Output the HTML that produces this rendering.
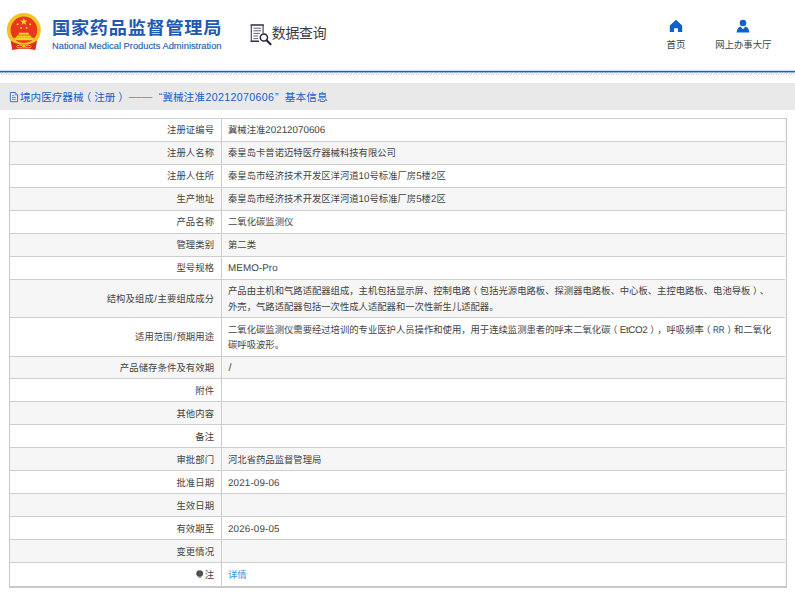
<!DOCTYPE html>
<html lang="zh-CN">
<head>
<meta charset="utf-8">
<title>国家药品监督管理局 数据查询</title>
<style>
html,body{margin:0;padding:0;}
body{width:795px;height:595px;overflow:hidden;background:#fff;position:relative;
  font-family:"Liberation Sans","Noto Sans CJK SC",sans-serif;color:#3a3a3a;}
.abs{position:absolute;white-space:nowrap;}
/* header */
#logo-cn{left:52px;top:14.8px;font-size:18.2px;line-height:26px;font-weight:bold;color:#2059b2;letter-spacing:0.72px;transform:scaleY(0.945);transform-origin:0 50%;}
#logo-en{left:52px;top:40px;font-size:9.33px;line-height:12px;color:#2a60b0;-webkit-text-stroke:.15px #2a60b0;}
#dq{left:271.7px;top:22.6px;font-size:13.9px;line-height:20px;color:#3c3c44;letter-spacing:-0.2px;}
.nav{font-size:9.4px;line-height:12px;color:#444;text-align:center;width:80px;}
#nav1{left:636px;top:38.8px;}
#nav2{left:703.3px;top:38.8px;}
/* banner */
#banner{left:0;top:83px;width:795px;height:26px;background:#e9e9e9;border-bottom:1px solid #e4ebf5;}
#btxt span{position:absolute;top:0;white-space:nowrap;}
#btxt{left:20px;width:320px;height:15px;top:90px;font-size:10.6px;line-height:15px;color:#1560cc;}
/* table */
#tb{left:9px;top:118px;width:776px;height:467px;border:1px solid #c9c9c9;border-bottom:2px solid #c9c9c9;background:#f0f4fb;}
.r{position:absolute;left:0;width:775px;background:#fff;border-top:1px solid #cdcdcd;box-sizing:border-box;}
.r.g{background:#f6f6f6;}
.r .l{position:absolute;left:0;top:0;bottom:0;width:211px;border-right:1px solid #cdcdcd;}
.r .l span{position:absolute;right:6.9px;letter-spacing:.1px;top:50%;transform:translateY(-50%);white-space:nowrap;}
.r .v{position:absolute;left:218px;top:50%;transform:translateY(-50%);white-space:nowrap;}
.r.d .l span,.r.d .v{transform:translateY(calc(-50% + .6px));}
.r span,.r .v{font-size:9.34px;text-spacing-trim:space-all;font-feature-settings:"chws" 0,"halt" 0;line-height:15.5px;color:#434343;}
.r .v b{text-rendering:geometricPrecision;font-weight:normal;font-size:9.8px;letter-spacing:0;position:relative;top:0;}
.r .l i{font-style:normal;margin:0 .5px;}
em{font-style:normal;position:relative;}
em.pl{left:-.27em;}
em.pr{left:.27em;}
a{color:#3a8ff2;text-decoration:none;}
</style>
</head>
<body>

<!-- emblem -->
<svg class="abs" style="left:4px;top:11px" width="40" height="40" viewBox="0 0 40 40">
  <circle cx="19.85" cy="19" r="17" fill="#f5c31f"/>
  <circle cx="19.9" cy="18.9" r="13.3" fill="#e6371f"/>
  <path d="M19.85 6.9l1 2.7h2.8l-2.3 1.7.9 2.7-2.4-1.7-2.4 1.7.9-2.7-2.3-1.7h2.8z" fill="#f9d42c"/>
  <circle cx="13.6" cy="13.2" r="1" fill="#f9d42c"/><circle cx="26.1" cy="13.2" r="1" fill="#f9d42c"/>
  <circle cx="17.1" cy="17" r="1" fill="#f9d42c"/><circle cx="22.6" cy="17" r="1" fill="#f9d42c"/>
  <path d="M15.2 21.8h9.2l.8 2h-10.8z M13.3 24.4h13l1.6 2H11.7z M9.8 26.8h20.2l-1 2.4H10.8z" fill="#f9d42c"/>
  <path d="M6.6 29.6L8.3 38.9Q19.85 36.8 31.4 38.9L33.1 29.6Q28 33.6 19.85 33.9Q11.7 33.6 6.6 29.6Z" fill="#dd2c1c"/>
  <path d="M9.6 30.4Q19.85 34.6 30.1 30.4" stroke="#f5c31f" stroke-width="1.2" fill="none"/>
  <ellipse cx="15.6" cy="35.6" rx="3" ry="1.3" fill="none" stroke="#f5c31f" stroke-width="1"/>
  <ellipse cx="24.1" cy="35.6" rx="3" ry="1.3" fill="none" stroke="#f5c31f" stroke-width="1"/>
  <circle cx="19.85" cy="35.3" r="1.5" fill="#f5c31f"/>
</svg>
<div id="logo-cn" class="abs">国家药品监督管理局</div>
<div id="logo-en" class="abs">National Medical Products Administration</div>

<!-- data query icon -->
<svg class="abs" style="left:249px;top:22px" width="26" height="26" viewBox="0 0 26 26">
  <path d="M1.6 3h13.2M1.6 19.3h8.4" stroke="#2e2e44" stroke-width="1.5" fill="none"/>
  <path d="M2.3 3v16.3M14.1 3v8" stroke="#3a3a50" stroke-width="1.1" fill="none"/>
  <path d="M4.4 6.2h7.8M4.4 8.8h7.8M4.4 11.4h6.4M4.4 14h4.8M4.4 16.6h4.8" stroke="#62627a" stroke-width="1" fill="none"/>
  <circle cx="14.9" cy="15.5" r="3.6" fill="#fff" stroke="#23233a" stroke-width="1.5"/>
  <path d="M17.6 18.3l4 4" stroke="#23233a" stroke-width="2" stroke-linecap="round"/>
</svg>
<div id="dq" class="abs">数据查询</div>

<!-- nav icons -->
<svg class="abs" style="left:669px;top:19px" width="14" height="14" viewBox="0 0 14 14">
  <path d="M7 .7L.8 6.4V13h4.3V9.2h3.8V13h4.3V6.4z" fill="#1060c9"/>
</svg>
<div id="nav1" class="abs nav">首页</div>
<svg class="abs" style="left:736px;top:19px" width="14" height="14" viewBox="0 0 14 14">
  <circle cx="7" cy="4" r="3.3" fill="#1060c9"/>
  <path d="M.6 13.4Q1 8.2 4.6 7.4L7 10.2 9.4 7.4Q13 8.2 13.4 13.4z" fill="#1060c9"/>
</svg>
<div id="nav2" class="abs nav">网上办事大厅</div>

<!-- blue line + hatch -->
<div class="abs" style="left:0;top:72px;width:795px;height:3px;background:repeating-linear-gradient(125.3deg,#d3d3d3 0,#d3d3d3 .8px,rgba(255,255,255,0) .85px,rgba(255,255,255,0) 2.04px)"></div>
<svg class="abs" style="left:0;top:69px" width="795" height="8" viewBox="0 0 795 8">
  <rect x="0" y="1.76" width="795" height="1.64" fill="#1565c4"/>
</svg>

<!-- banner -->
<div id="banner" class="abs"></div>
<svg class="abs" style="left:9px;top:91px" width="10" height="12" viewBox="0 0 10 12">
  <path d="M1.3 1.5h4.9l2.4 2.4v6.8H1.3z" fill="none" stroke="#2468cf" stroke-width=".9"/>
  <path d="M6.2 1.5v2.4h2.4" fill="none" stroke="#2468cf" stroke-width=".6"/>
  <path d="M3 4.6h2M3 6.5h3.8M3 8.4h3.8" stroke="#2468cf" stroke-width=".7"/>
</svg>
<div id="btxt" class="abs"><span style="left:0">境内医疗器械<em class="pl">（</em>注册<em class="pr">）</em></span><span style="left:108.6px;top:-1.1px;font-size:11.8px;font-weight:300;transform:scaleY(.6);transform-origin:0 55%">——</span><span style="left:138.7px">“</span><span style="left:142.4px">冀械注准</span><span style="left:185.4px;letter-spacing:.36px">20212070606</span><span style="left:255px">”</span><span style="left:264.8px;letter-spacing:.15px">基本信息</span></div>

<!-- table -->
<div id="tb" class="abs">
  <div class="r" style="top:-1px;height:24px"><div class="l"><span>注册证编号</span></div><div class="v">冀械注准<b>20212070606</b></div></div>
  <div class="r g" style="top:22px;height:24px"><div class="l"><span>注册人名称</span></div><div class="v">秦皇岛卡普诺迈特医疗器械科技有限公司</div></div>
  <div class="r" style="top:45px;height:24px"><div class="l"><span>注册人住所</span></div><div class="v">秦皇岛市经济技术开发区洋河道<b>10</b>号标准厂房<b>5</b>楼<b>2</b>区</div></div>
  <div class="r g" style="top:68px;height:24px"><div class="l"><span>生产地址</span></div><div class="v">秦皇岛市经济技术开发区洋河道<b>10</b>号标准厂房<b>5</b>楼<b>2</b>区</div></div>
  <div class="r" style="top:91px;height:24px"><div class="l"><span>产品名称</span></div><div class="v">二氧化碳监测仪</div></div>
  <div class="r g" style="top:114px;height:24px"><div class="l"><span>管理类别</span></div><div class="v">第二类</div></div>
  <div class="r" style="top:137px;height:24px"><div class="l"><span>型号规格</span></div><div class="v"><b style="letter-spacing:.1px">MEMO-Pro</b></div></div>
  <div class="r g" style="top:160px;height:39px"><div class="l"><span style="transform:translateY(calc(-50% + .8px))">结构及组成<i>/</i>主要组成成分</span></div><div class="v">产品由主机和气路适配器组成，主机包括显示屏、控制电路<em class="pl">（</em>包括光源电路板、探测器电路板、中心板、主控电路板、电池导板<em class="pr">）</em>、<br>外壳，气路适配器包括一次性成人适配器和一次性新生儿适配器。</div></div>
  <div class="r" style="top:198px;height:40px"><div class="l"><span>适用范围<i>/</i>预期用途</span></div><div class="v">二氧化碳监测仪需要经过培训的专业医护人员操作和使用，用于连续监测患者的呼末二氧化碳<em class="pl">（</em><b style="letter-spacing:-.34px;margin-right:.34px">EtCO2</b><em class="pr">）</em>，呼吸频率<em class="pl">（</em><b style="display:inline-block;letter-spacing:0;transform:scaleX(.82);transform-origin:0 50%;margin-right:-2.55px">RR</b><em class="pr">）</em>和二氧化<br>碳呼吸波形。</div></div>
  <div class="r g d" style="top:237px;height:23px"><div class="l"><span>产品储存条件及有效期</span></div><div class="v"><b style="font-size:10.8px;margin-left:.6px">/</b></div></div>
  <div class="r d" style="top:259px;height:24px"><div class="l"><span>附件</span></div><div class="v"></div></div>
  <div class="r g d" style="top:282px;height:24px"><div class="l"><span>其他内容</span></div><div class="v"></div></div>
  <div class="r d" style="top:305px;height:24px"><div class="l"><span>备注</span></div><div class="v"></div></div>
  <div class="r g d" style="top:328px;height:24px"><div class="l"><span>审批部门</span></div><div class="v">河北省药品监督管理局</div></div>
  <div class="r d" style="top:351px;height:24px"><div class="l"><span>批准日期</span></div><div class="v"><b style="letter-spacing:.16px">2021-09-06</b></div></div>
  <div class="r g d" style="top:374px;height:24px"><div class="l"><span>生效日期</span></div><div class="v"></div></div>
  <div class="r d" style="top:397px;height:24px"><div class="l"><span>有效期至</span></div><div class="v"><b style="letter-spacing:.16px">2026-09-05</b></div></div>
  <div class="r g d" style="top:420px;height:24px"><div class="l"><span>变更情况</span></div><div class="v"></div></div>
  <div class="r d" style="top:443px;height:24px"><div class="l"><span><svg width="8" height="9" viewBox="0 0 8 9" style="vertical-align:-1.6px;margin-right:.9px"><circle cx="3.7" cy="3.7" r="3.4" fill="#505050"/><path d="M2.5 6.6h2.4v1.9H2.5z" fill="#a0a0a0"/></svg>注</span></div><div class="v"><a>详情</a></div></div>
</div>

</body>
</html>
